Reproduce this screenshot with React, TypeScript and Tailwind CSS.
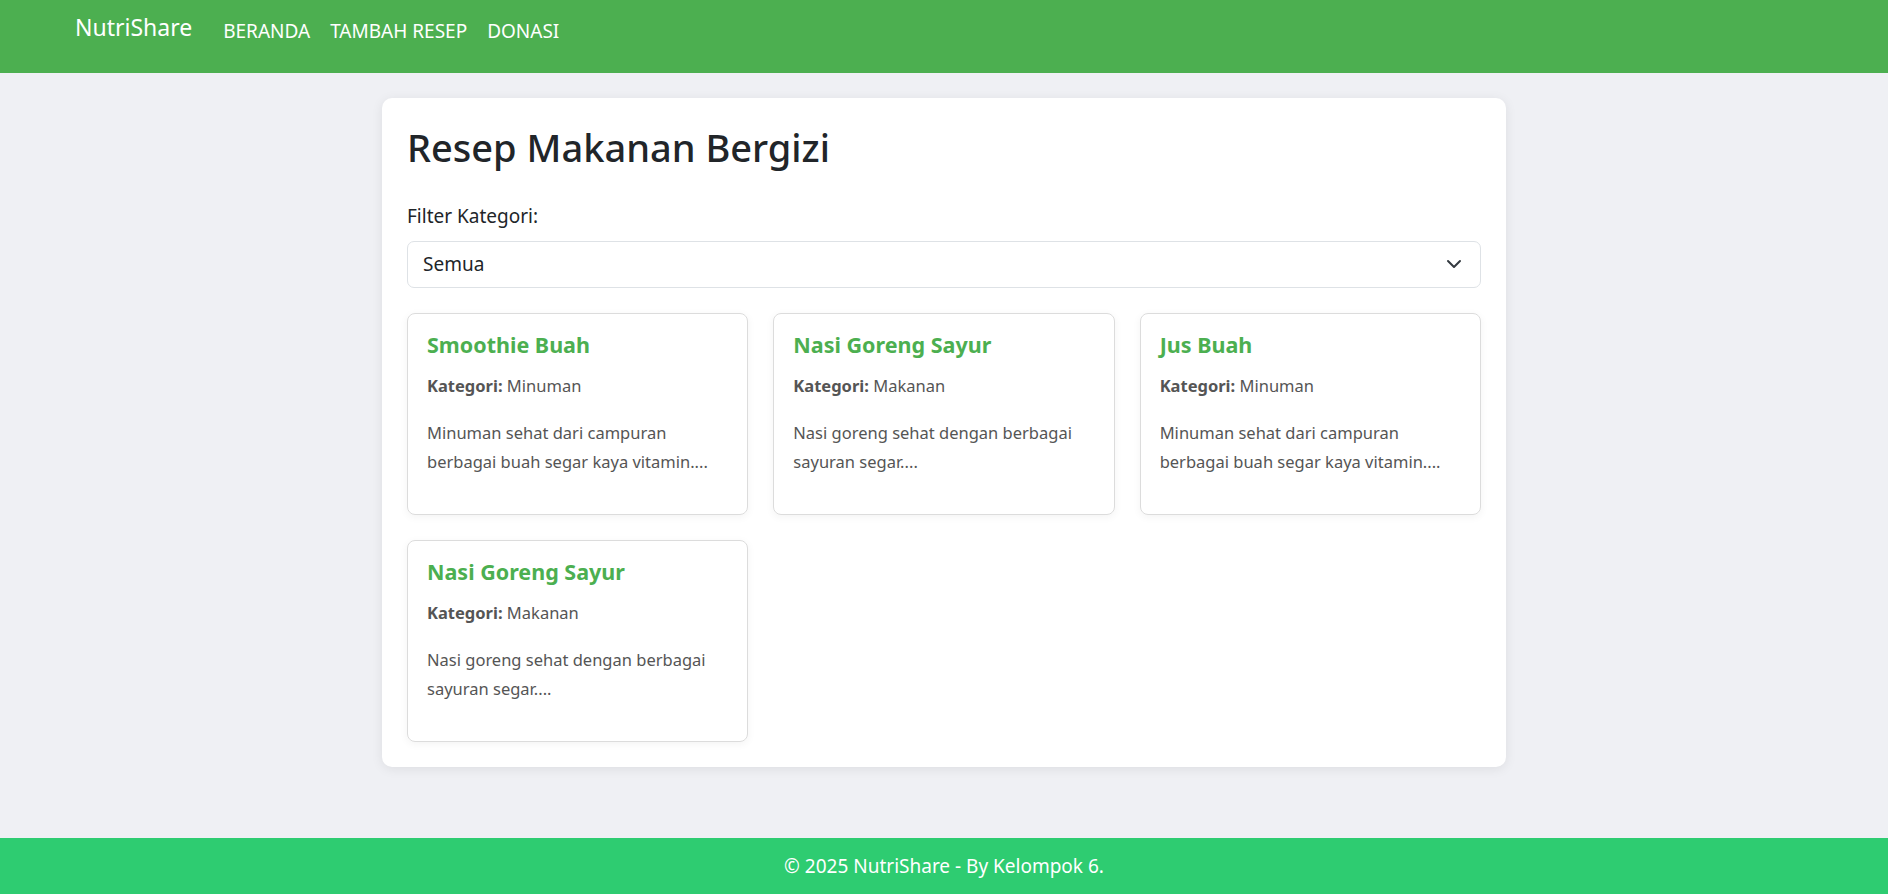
import { useState } from 'react';

type Recipe = { title: string; category: string; desc: string };

const RECIPES: Recipe[] = [
  { title: 'Smoothie Buah',      category: 'Minuman', desc: 'Minuman sehat dari campuran berbagai buah segar kaya vitamin....' },
  { title: 'Nasi Goreng Sayur',  category: 'Makanan', desc: 'Nasi goreng sehat dengan berbagai sayuran segar....' },
  { title: 'Jus Buah',           category: 'Minuman', desc: 'Minuman sehat dari campuran berbagai buah segar kaya vitamin....' },
  { title: 'Nasi Goreng Sayur',  category: 'Makanan', desc: 'Nasi goreng sehat dengan berbagai sayuran segar....' },
];

export default function App() {
  const [filter, setFilter] = useState('Semua');

  const shown = filter === 'Semua' ? RECIPES : RECIPES.filter(r => r.category === filter);

  return (
    <div className="min-h-screen flex flex-col bg-[#eff0f4] font-['Noto_Sans',sans-serif] text-[19px] text-[#212529]">

      {/* Navbar */}
      <nav className="h-[73px] bg-[#4caf50] flex items-center pl-[75px] text-white">
        <a href="#" className="text-[23px] leading-none mr-[31px] -mt-[18px]">NutriShare</a>
        <div className="flex gap-[20px] text-[19px] -mt-[10px]">
          <a href="#">BERANDA</a>
          <a href="#">TAMBAH RESEP</a>
          <a href="#">DONASI</a>
        </div>
      </nav>

      {/* Content */}
      <main className="w-[1124px] mx-auto mt-[25px] mb-[68px] bg-white rounded-[10px] p-[25px] shadow-[0_2px_12px_rgba(0,0,0,0.08)]">
        <h1 className="text-[38px] leading-[1.2] font-medium mt-[2px]">Resep Makanan Bergizi</h1>

        <label className="block mt-[31px] leading-[1.5]">Filter Kategori:</label>
        <div className="relative mt-[11px]">
          <select
            value={filter}
            onChange={e => setFilter(e.target.value)}
            className="w-full h-[47px] appearance-none border border-[#dee2e6] rounded-[7px] pl-[15px] text-[19px] bg-white outline-none"
          >
            <option>Semua</option>
            <option>Makanan</option>
            <option>Minuman</option>
          </select>
          <svg className="absolute right-[19px] top-[17px] pointer-events-none" width="16" height="12" viewBox="0 0 16 12" fill="none">
            <path d="M2 3l6 6 6-6" stroke="#343a40" strokeWidth="2" strokeLinecap="round" strokeLinejoin="round" />
          </svg>
        </div>

        {/* Recipe cards */}
        <div className="grid grid-cols-3 gap-x-[25px] gap-y-[25px] mt-[25px]">
          {shown.map((r, i) => (
            <div key={i} className="h-[202px] border border-[#dcdcdc] rounded-[8px] px-[19px] pt-[18px] shadow-[0_2px_8px_rgba(0,0,0,0.05)]">
              <h3 className="text-[21.5px] leading-[1.2] font-bold text-[#4caf50]">{r.title}</h3>
              <p className="mt-[16px] text-[16.5px] leading-[1.5] text-[#555]">
                <strong>Kategori:</strong> {r.category}
              </p>
              <p className="mt-[19px] text-[16.5px] leading-[29px] text-[#555]">{r.desc}</p>
            </div>
          ))}
        </div>
      </main>

      {/* Footer */}
      <footer className="mt-auto h-[56px] bg-[#2ecc71] text-white flex items-center justify-center text-[19px]">
        © 2025 NutriShare - By Kelompok 6.
      </footer>
    </div>
  );
}
